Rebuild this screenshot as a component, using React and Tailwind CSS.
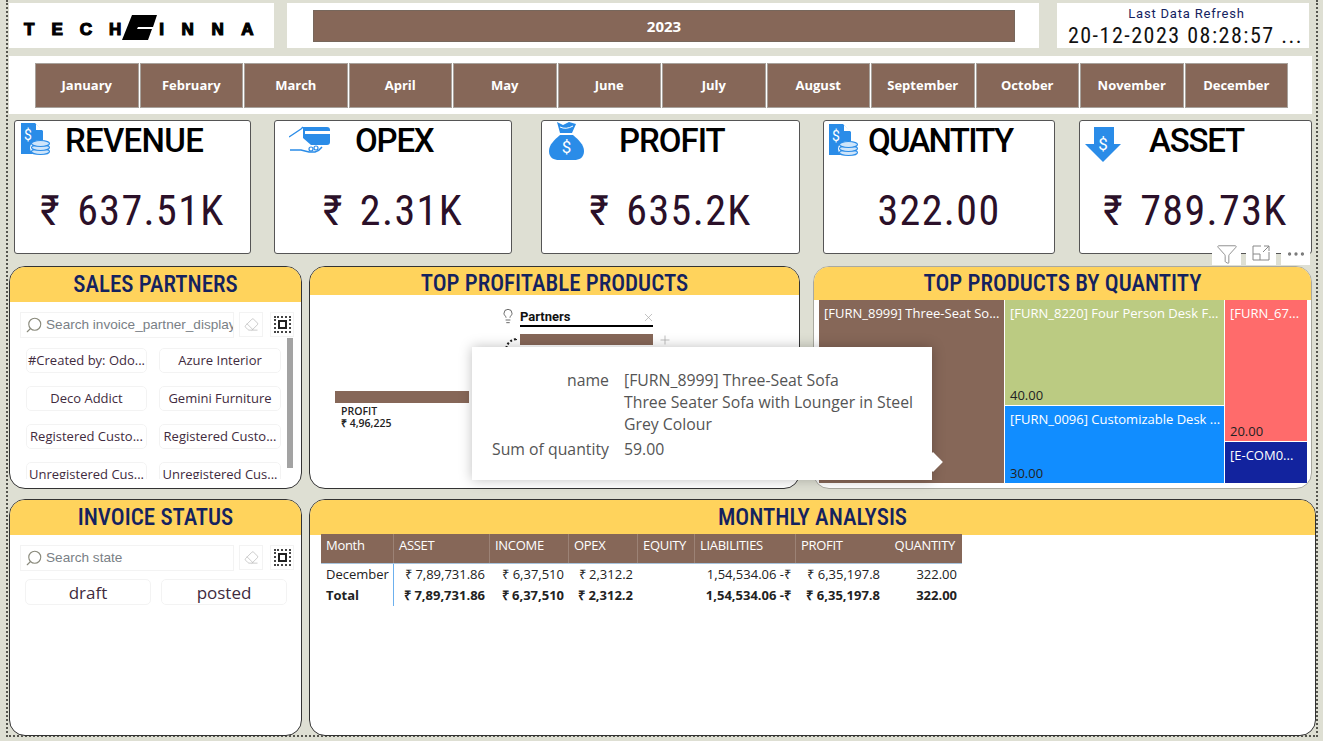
import { X, Plus, Lightbulb, Search, Eraser, Funnel, MoreHorizontal } from 'lucide-react'

const months = ['January', 'February', 'March', 'April', 'May', 'June', 'July', 'August', 'September', 'October', 'November', 'December']
const partners = ['#Created by: Odo...', 'Azure Interior', 'Deco Addict', 'Gemini Furniture', 'Registered Custo...', 'Registered Custo...', 'Unregistered Cus...', 'Unregistered Cus...']
const columns = ['Month', 'ASSET', 'INCOME', 'OPEX', 'EQUITY', 'LIABILITIES', 'PROFIT', 'QUANTITY']
const december = ['December', '₹ 7,89,731.86', '₹ 6,37,510', '₹ 2,312.2', '', '1,54,534.06 -₹', '₹ 6,35,197.8', '322.00']
const total = ['Total', '₹ 7,89,731.86', '₹ 6,37,510', '₹ 2,312.2', '', '1,54,534.06 -₹', '₹ 6,35,197.8', '322.00']
const tableGrid = 'grid grid-cols-[73px_96px_79px_69px_57px_101px_89px_77px]'

function DocCoins() {
  return (
    <svg width="30" height="33" viewBox="0 0 30 33">
      <path d="M0 0H14L22 8V31H0Z" fill="#2a8ce8" />
      <path d="M15 1L22 7H15Z" fill="#fff" />
      <text x="3" y="17" fontSize="14" fill="#fff" fontFamily="Roboto, sans-serif">$</text>
      <ellipse cx="19.5" cy="25" rx="10.5" ry="8" fill="#fff" />
      <g fill="#cfe5fa" stroke="#2a8ce8" strokeWidth="1.1">
        <ellipse cx="19.5" cy="28.5" rx="9" ry="3" />
        <ellipse cx="19.5" cy="24.5" rx="9" ry="3" />
        <ellipse cx="19.5" cy="20.5" rx="9" ry="3" />
      </g>
    </svg>
  )
}

function HandCard() {
  return (
    <svg width="42" height="27" viewBox="0 0 42 27">
      <path d="M14 1H38Q41 1 41 4V16Q41 19 38 19H22L14 12Z" fill="#2a8ce8" />
      <rect x="16" y="5" width="25" height="3" fill="#fff" />
      <path d="M0 11L12 3M12 3L14 1M1 24H12L20 26H26Q30 25 33 21" fill="none" stroke="#2a8ce8" strokeWidth="1.4" />
      <circle cx="22" cy="23" r="2" fill="#fff" stroke="#2a8ce8" strokeWidth="1.2" />
      <circle cx="27" cy="22" r="2" fill="#fff" stroke="#2a8ce8" strokeWidth="1.2" />
    </svg>
  )
}

function MoneyBag() {
  return (
    <svg width="37" height="40" viewBox="0 0 37 40">
      <path d="M9 1L15 4L21 1L28 3L24 12H12Z" fill="#2a8ce8" />
      <path d="M12 6Q18 9 25 5" fill="none" stroke="#fff" strokeWidth="1" />
      <path d="M12 14H25C31 19 36 24 36 30C36 37 31 39 26 39H11C6 39 1 37 1 30C1 24 6 19 12 14Z" fill="#2a8ce8" />
      <text x="18.5" y="32" fontSize="17" textAnchor="middle" fill="#fff" fontFamily="Roboto, sans-serif">$</text>
    </svg>
  )
}

function ArrowDollar() {
  return (
    <svg width="36" height="36" viewBox="0 0 36 36">
      <path d="M9 0H29V17H36L18 35L0 17H9Z" fill="#2a8ce8" />
      <text x="18" y="23" fontSize="17" textAnchor="middle" fill="#fff" fontFamily="Roboto, sans-serif">$</text>
    </svg>
  )
}

function Kpi({ width, title, value, icon, iconClass, titleClass }) {
  return (
    <div className={`${width} relative h-[134px] bg-white border border-[#555] rounded-[3px] font-['Roboto',sans-serif]`}>
      <div className={iconClass}>{icon}</div>
      <div className={`${titleClass} absolute top-[1px] whitespace-nowrap text-[33px] leading-[38px] font-medium text-black`}>{title}</div>
      <div className="pt-[60px] text-center text-[42px] leading-[60px] tracking-[1.4px] text-[#2b1029] [font-stretch:82%] [word-spacing:5px]">{value}</div>
    </div>
  )
}

function PanelHeader({ children, height = 'h-[35px]' }) {
  return (
    <div className={`${height} shrink-0 bg-[#ffd35c] text-center text-[23px] leading-[36px] font-medium text-[#14225f] font-['Roboto',sans-serif] [font-stretch:condensed]`}>
      {children}
    </div>
  )
}

function SearchBar({ placeholder }) {
  return (
    <div className="flex gap-[5px]">
      <div className="w-[214px] h-[26px] flex items-center gap-[3px] pl-[4px] border border-[#f3f3f3] overflow-hidden whitespace-nowrap text-[13.6px] text-[#7a7f86] font-['Liberation_Sans',sans-serif]">
        <Search size={18} strokeWidth={1.5} className="text-[#8a8a7c] -scale-x-100 shrink-0" />
        {placeholder}
      </div>
      <div className="w-[24px] h-[25px] flex items-center justify-center border border-[#f3f3f3]">
        <Eraser size={15} strokeWidth={1.2} className="text-[#bbb]" />
      </div>
      <div className="ml-[2px] w-[24px] h-[25px] flex items-center justify-center border border-[#f3f3f3]">
        <div className="p-[2px] border-2 border-dotted border-[#444]">
          <div className="w-[9px] h-[9px] border-2 border-[#222]" />
        </div>
      </div>
    </div>
  )
}

function Tile({ name, value, className, valueClass = 'text-[#222]' }) {
  return (
    <div className={`${className} flex flex-col justify-between overflow-hidden pl-[5px] pr-[2px] pt-[4px] pb-[1px] whitespace-nowrap font-['Open_Sans',sans-serif] text-[13px] leading-[18px] text-white`}>
      <span>{name}</span>
      {value && <span className={valueClass}>{value}</span>}
    </div>
  )
}

function TableRow({ cells, bold }) {
  return (
    <div className={`${tableGrid} h-[21px] items-center text-[13px] text-[#222] font-['Open_Sans',sans-serif] ${bold ? 'font-bold' : ''}`}>
      {cells.map((c, i) => (
        <div key={i} className={`${i === 0 ? 'text-left pl-[5px] h-full flex items-center border-r border-[#6cb0ee]' : 'text-right pr-[5px]'} whitespace-nowrap`}>{c}</div>
      ))}
    </div>
  )
}

export default function App() {
  return (
    <div className="relative w-[1323px] h-[741px] overflow-hidden bg-[#dedfd3]">
      <div className="ml-[6px] w-[1312px] h-[737px] border-x-2 border-b-2 border-dotted border-[#55554e] pt-[3px]">
        {/* top row */}
        <div className="flex h-[45px] pl-[1px]">
          <div className="w-[265px] bg-white flex items-center pl-[15px] pt-[9px] font-['Liberation_Sans',sans-serif] font-bold text-[17px] text-black">
            <span className="tracking-[17px] [-webkit-text-stroke:1.2px_black]">TECH</span>
            <svg width="36" height="26" viewBox="0 0 36 26" className="-ml-[16px] -mt-[4px]">
              <path d="M10 0H35L31 12H16L15 14H30L26 25H0Z" fill="#000" />
            </svg>
            <span className="ml-[1px] tracking-[17.6px] [-webkit-text-stroke:1.2px_black]">INNA</span>
          </div>
          <div className="ml-[13px] w-[752px] bg-white pl-[26px] pt-[7px]">
            <div className="w-[702px] h-[32px] bg-[#866758] border border-[#77675c] flex items-center justify-center text-white text-[15px] font-bold font-['Open_Sans',sans-serif]">2023</div>
          </div>
          <div className="ml-[18px] w-[252px] pl-[5px] bg-white text-center font-['Roboto',sans-serif]">
            <div className="pl-[2px] text-[13px] leading-[18px] pt-[2px] tracking-[0.8px] text-[#14225f]">Last Data Refresh</div>
            <div className="text-[22px] leading-[26px] tracking-[1.5px] text-[#111] whitespace-nowrap [font-stretch:85%]">20-12-2023 08:28:57 ...</div>
          </div>
        </div>
        {/* month slicer */}
        <div className="mt-[8px] ml-[1px] w-[1303px] h-[58px] bg-white pl-[26px] pt-[7px] flex items-start gap-[1px]">
          {months.map(m => (
            <div key={m} className="w-[103.5px] h-[45px] shrink-0 bg-[#866758] border border-[#a8a29c] flex items-center justify-center pt-[1px] text-white text-[13px] font-bold font-['Open_Sans',sans-serif]">{m}</div>
          ))}
        </div>
        {/* kpi cards */}
        <div className="mt-[6px] ml-[6px] flex">
          <Kpi width="w-[237px]" title="REVENUE" value="₹ 637.51K" icon={<DocCoins />} iconClass="absolute left-[6px] top-[2px]" titleClass="left-[50px] tracking-[-0.7px]" />
          <div className="ml-[23px]">
            <Kpi width="w-[238px]" title="OPEX" value="₹ 2.31K" icon={<HandCard />} iconClass="absolute left-[14px] top-[5px]" titleClass="left-[80px] tracking-[-1.2px]" />
          </div>
          <div className="ml-[29px]">
            <Kpi width="w-[259px]" title="PROFIT" value="₹ 635.2K" icon={<MoneyBag />} iconClass="absolute left-[6px] top-0" titleClass="left-[77px] tracking-[-1px]" />
          </div>
          <div className="ml-[23px]">
            <Kpi width="w-[232px]" title="QUANTITY" value="322.00" icon={<DocCoins />} iconClass="absolute left-[5px] top-[3px]" titleClass="left-[44px] tracking-[-1.75px]" />
          </div>
          <div className="ml-[24px]">
            <Kpi width="w-[233px]" title="ASSET" value="₹ 789.73K" icon={<ArrowDollar />} iconClass="absolute left-[5px] top-[6px]" titleClass="left-[69px] tracking-[-1.2px]" />
          </div>
        </div>
        {/* middle row */}
        <div className="mt-[12px] ml-[1px] flex h-[223px]">
          <div className="w-[293px] bg-white border border-[#333] rounded-[16px] overflow-hidden flex flex-col">
            <PanelHeader>SALES PARTNERS</PanelHeader>
            <div className="pl-[10px] pt-[10px]">
              <SearchBar placeholder="Search invoice_partner_display" />
            </div>
            <div className="flex pl-[16px]">
              <div className="w-[256px] h-[141px] overflow-hidden pt-[10px] grid grid-cols-[121px_122px] gap-x-[12px] gap-y-[13px] auto-rows-[25px]">
                {partners.map((p, i) => (
                  <div key={i} className="border border-[#f3f3f3] rounded-[5px] flex items-center justify-center whitespace-nowrap text-[13px] text-[#3f2b3e] font-['Open_Sans',sans-serif]">{p}</div>
                ))}
              </div>
              <div className="ml-[5px] w-[6px] h-[130px] bg-[#a3a3a3]" />
            </div>
          </div>
          <div className="ml-[7px] w-[491px] bg-white border border-[#333] rounded-[16px] overflow-hidden flex flex-col">
            <PanelHeader height="h-[28px]">
              <span className="block -mt-[1px]">TOP PROFITABLE PRODUCTS</span>
            </PanelHeader>
            <div className="relative flex-1">
              <div className="absolute left-[25px] top-[96px] w-[134px] h-[12px] bg-[#866758]" />
              <div className="absolute left-[31px] top-[110px] text-[10.5px] leading-[12px] font-semibold text-[#222] font-['Open_Sans',sans-serif]">PROFIT<br />₹ 4,96,225</div>
              <Lightbulb size={16} strokeWidth={1.2} className="absolute left-[190px] top-[13px] text-[#444]" />
              <div className="absolute left-[210px] top-[13px] w-[133px] h-[19px] border-b-2 border-black text-[13px] leading-[15px] pt-[1px] font-bold text-[#111] font-['Roboto',sans-serif]">Partners</div>
              <X size={13} strokeWidth={1.3} className="absolute left-[332px] top-[16px] text-[#aaa]" />
              <div className="absolute left-[210px] top-[39px] w-[133px] h-[11px] bg-[#866758]" />
              <Plus size={14} strokeWidth={1.3} className="absolute left-[348px] top-[38px] text-[#aaa]" />
              <div className="absolute left-[195px] top-[43px] w-[12px] h-[12px] rounded-tl-[12px] border-l-2 border-t-2 border-dotted border-[#222]" />
            </div>
          </div>
          <div className="ml-[13px] w-[499px] bg-white border border-[#a9a9a0] rounded-[16px] overflow-hidden flex flex-col">
            <PanelHeader height="h-[33px]">
              <span className="block -mt-[1px]">TOP PRODUCTS BY QUANTITY</span>
            </PanelHeader>
            <div className="flex flex-1 gap-[1px] pl-[5px] pr-[4px] pb-[5px]">
              <Tile className="w-[185px] bg-[#866758]" name="[FURN_8999] Three-Seat So..." />
              <div className="w-[219px] flex flex-col gap-[1px]">
                <Tile className="h-[105px] bg-[#bbcb82]" name="[FURN_8220] Four Person Desk F..." value="40.00" />
                <Tile className="flex-1 bg-[#118dff]" name="[FURN_0096] Customizable Desk ..." value="30.00" />
              </div>
              <div className="flex-1 flex flex-col gap-[1px]">
                <Tile className="h-[141px] bg-[#ff6b6b]" name="[FURN_67..." value="20.00" />
                <Tile className="flex-1 bg-[#12239e]" name="[E-COM0..." />
              </div>
            </div>
          </div>
        </div>
        {/* bottom row */}
        <div className="mt-[10px] ml-[1px] flex h-[237px]">
          <div className="w-[293px] bg-white border border-[#333] rounded-[16px] overflow-hidden flex flex-col">
            <PanelHeader>INVOICE STATUS</PanelHeader>
            <div className="pl-[10px] pt-[10px]">
              <SearchBar placeholder="Search state" />
            </div>
            <div className="mt-[8px] pl-[15px] flex gap-[10px]">
              {['draft', 'posted'].map(s => (
                <div key={s} className="w-[126px] h-[26px] pt-[1px] border border-[#f3f3f3] rounded-[5px] flex items-center justify-center text-[17px] text-[#3f2b3e] font-['Open_Sans',sans-serif]">{s}</div>
              ))}
            </div>
          </div>
          <div className="ml-[7px] w-[1007px] bg-white border border-[#333] rounded-[16px] overflow-hidden flex flex-col">
            <PanelHeader>MONTHLY ANALYSIS</PanelHeader>
            <div className="pl-[11px] -mt-[1px]">
              <div className={`${tableGrid} h-[30px] w-[641px] bg-[#866758] border-b border-[#a8c4dd] text-[13px] tracking-[-0.3px] text-white font-['Open_Sans',sans-serif]`}>
                {columns.map((c, i) => (
                  <div key={c} className={`pl-[5px] pt-[2px] whitespace-nowrap ${i < 6 ? 'border-r border-[#9c8275]' : ''} ${i === 7 ? 'text-right pr-[7px]' : ''}`}>{c}</div>
                ))}
              </div>
              <TableRow cells={december} />
              <TableRow cells={total} bold />
            </div>
          </div>
        </div>
      </div>

      {/* hover toolbar of the treemap */}
      <div className="absolute left-[1212px] top-[243px] flex gap-[5px] items-start">
        <div className="w-[29px] h-[22px] bg-white flex justify-center"><Funnel size={22} strokeWidth={1} className="text-[#888]" /></div>
        <div className="w-[30px] h-[22px] bg-white flex justify-center pt-[2px]">
          <svg width="18" height="16" viewBox="0 0 18 16" fill="none" stroke="#888" strokeWidth="1">
            <path d="M9 1H1V15H17V7M1 9H8V15M11 7L17 1M12 1H17V6" />
          </svg>
        </div>
        <div className="w-[29px] h-[22px] bg-white flex justify-center"><MoreHorizontal size={22} strokeWidth={1.6} className="text-[#777]" /></div>
      </div>

      {/* tooltip */}
      <div className="absolute left-[472px] top-[347px] w-[460px] h-[133px] bg-white shadow-[0_0_12px_rgba(0,0,0,0.25)] pt-[22px] font-['Open_Sans',sans-serif] text-[15.8px] leading-[22px] text-[#555]">
        <div className="grid grid-cols-[137px_1fr] gap-x-[15px]">
          <div className="text-right">name</div>
          <div className="whitespace-pre-line">{'[FURN_8999] Three-Seat Sofa\nThree Seater Sofa with Lounger in Steel\nGrey Colour'}</div>
          <div className="text-right mt-[3px]">Sum of quantity</div>
          <div className="mt-[3px]">59.00</div>
        </div>
        <div className="absolute -right-[8px] top-[108px] w-[14px] h-[14px] rotate-45 bg-white" />
      </div>
    </div>
  )
}
